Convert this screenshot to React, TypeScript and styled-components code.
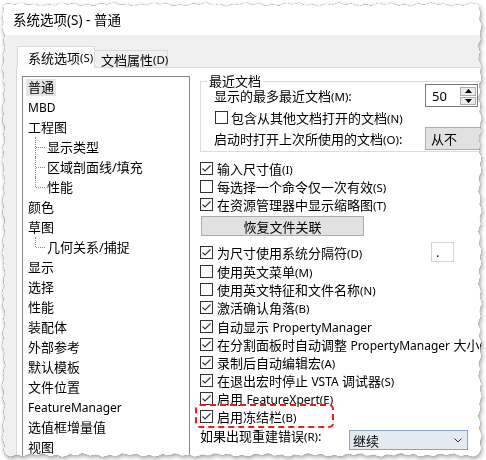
import React from "react";
import styled, { createGlobalStyle, css } from "styled-components";

const FONT = `"Noto Sans", "Noto Sans CJK SC", sans-serif`;

const GlobalStyle = createGlobalStyle`
  html, body {
    margin: 0;
    background: #fff;
  }
  body {
    font-family: ${FONT};
    font-size: 13px;
    color: #000;
  }
`;

// ragged "torn paper" outline of the screenshot
const tornEdge = () => {
  const j = (i: number, s: number) =>
    Math.sin(i * 1.9 + s) * 1.1 + Math.sin(i * 0.55 + s * 2) * 0.9;
  const pts: string[] = [];
  for (let x = 3; x <= 479; x += 4) pts.push(`${x}px ${(4.5 + j(x / 4, 1)).toFixed(1)}px`);
  for (let y = 8; y <= 452; y += 4) pts.push(`${(480 + j(y / 4, 2)).toFixed(1)}px ${y}px`);
  for (let x = 478; x >= 5; x -= 4) pts.push(`${x}px ${(455 + j(x / 4, 3)).toFixed(1)}px`);
  for (let y = 450; y >= 8; y -= 4) pts.push(`${(3.5 + j(y / 4, 4)).toFixed(1)}px ${y}px`);
  return `polygon(${pts.join(",")})`;
};
const CLIP = tornEdge();

type TreeNode = { title: string; selected?: boolean; children?: string[] };

const tree: TreeNode[] = [
  { title: "普通", selected: true },
  { title: "MBD" },
  { title: "工程图", children: ["显示类型", "区域剖面线/填充", "性能"] },
  { title: "颜色" },
  { title: "草图", children: ["几何关系/捕捉"] },
  { title: "显示" },
  { title: "选择" },
  { title: "性能" },
  { title: "装配体" },
  { title: "外部参考" },
  { title: "默认模板" },
  { title: "文件位置" },
  { title: "FeatureManager" },
  { title: "选值框增量值" },
  { title: "视图" },
];

// Latin words render a touch smaller (Segoe UI look), mnemonics smaller still
const Label = ({ text }: { text: string }) => {
  const m = text.match(/^(.*?)(\([A-Z]\))?(:?)$/)!;
  const chunks = m[1]
    .split(/([A-Za-z]+)/)
    .map((s, i) => (i % 2 ? <Latin key={i}>{s}</Latin> : s));
  return (
    <>
      {chunks}
      {m[2] && <Mnemonic>{m[2]}</Mnemonic>}
      {m[3]}
    </>
  );
};

const CheckBox = ({ checked }: { checked?: boolean }) => (
  <Box>
    {checked && (
      <svg width="11" height="11" viewBox="0 0 11 11">
        <polyline
          points="1.5,5.5 4,8 9.5,2.5"
          fill="none"
          stroke="#333"
          strokeWidth="1.1"
        />
      </svg>
    )}
  </Box>
);

const Check = ({
  text,
  checked,
  mt,
  marked,
}: {
  text: string;
  checked?: boolean;
  mt?: number;
  marked?: boolean;
}) => (
  <CheckRow $mt={mt} $marked={marked}>
    <CheckBox checked={checked} />
    <span>
      <Label text={text} />
    </span>
  </CheckRow>
);

const App = () => {
  return (
    <>
      <GlobalStyle />
      <Frame>
        <Window>
          <TitleBar>系统选项(S) - 普通</TitleBar>
          <TabStrip>
            <Tab $active>
              <Label text="系统选项(S)" />
            </Tab>
            <Tab>
              <Label text="文档属性(D)" />
            </Tab>
          </TabStrip>
          <Panel>
            <Tree>
              {tree.map((node) => (
                <React.Fragment key={node.title}>
                  <TreeItem>
                    <TreeText $selected={node.selected}>
                      <Label text={node.title} />
                    </TreeText>
                  </TreeItem>
                  {node.children?.map((c, i) => (
                    <TreeItem
                      key={c}
                      $child
                      $last={i === node.children!.length - 1}
                    >
                      <TreeText>{c}</TreeText>
                    </TreeItem>
                  ))}
                </React.Fragment>
              ))}
            </Tree>

            <Options>
              <Group>
                <Legend>最近文档</Legend>
                <GroupRow $h={23} $mt={-5}>
                  <span>
                    <Label text="显示的最多最近文档(M):" />
                  </span>
                  <Spinner>
                    <SpinValue>50</SpinValue>
                    <SpinButtons>
                      <SpinButton>
                        <svg width="7" height="4" viewBox="0 0 7 4">
                          <polygon points="0,4 7,4 3.5,0" fill="#000" />
                        </svg>
                      </SpinButton>
                      <SpinButton>
                        <svg width="7" height="4" viewBox="0 0 7 4">
                          <polygon points="0,0 7,0 3.5,4" fill="#000" />
                        </svg>
                      </SpinButton>
                    </SpinButtons>
                  </Spinner>
                </GroupRow>
                <GroupRow $h={20}>
                  <InnerCheck>
                    <CheckBox />
                    <span>
                      <Label text="包含从其他文档打开的文档(N)" />
                    </span>
                  </InnerCheck>
                </GroupRow>
                <GroupRow $h={23}>
                  <span>
                    <Label text="启动时打开上次所使用的文档(O):" />
                  </span>
                  <GraySelect>从不</GraySelect>
                </GroupRow>
              </Group>

              <Check text="输入尺寸值(I)" checked mt={7} />
              <Check text="每选择一个命令仅一次有效(S)" />
              <Check text="在资源管理器中显示缩略图(T)" checked />
              <Button>恢复文件关联</Button>

              <SeparatorRow>
                <Check text="为尺寸使用系统分隔符(D)" checked />
                <SmallInput>.</SmallInput>
              </SeparatorRow>
              <Check text="使用英文菜单(M)" />
              <Check text="使用英文特征和文件名称(N)" />
              <Check text="激活确认角落(B)" checked />
              <Check text="自动显示 PropertyManager" checked mt={1} />
              <Check text="在分割面板时自动调整 PropertyManager 大小(N)" checked />
              <Check text="录制后自动编辑宏(A)" checked />
              <Check text="在退出宏时停止 VSTA 调试器(S)" checked />
              <Check text="启用 FeatureXpert(E)" checked />
              <Check text="启用冻结栏(B)" checked marked />

              <ErrorRow>
                <ErrorLabel>
                  <Label text="如果出现重建错误(R):" />
                </ErrorLabel>
                <Combo>
                  <span>继续</span>
                  <svg width="8" height="5" viewBox="0 0 8 5">
                    <polyline
                      points="0.5,0.5 4,4 7.5,0.5"
                      fill="none"
                      stroke="#333"
                      strokeWidth="1"
                    />
                  </svg>
                </Combo>
              </ErrorRow>
            </Options>
          </Panel>
        </Window>
      </Frame>
    </>
  );
};

const Frame = styled.div`
  width: 486px;
  height: 460px;
  overflow: hidden;
  filter: drop-shadow(0 0 0.7px rgba(0, 0, 0, 0.85))
    drop-shadow(1px 2px 2px rgba(0, 0, 0, 0.35));
`;

const Window = styled.div`
  width: 486px;
  height: 460px;
  clip-path: ${CLIP};
  background: #f0f0f0;
  display: flex;
  flex-direction: column;
  overflow: hidden;
`;

const TitleBar = styled.div`
  height: 35px;
  flex-shrink: 0;
  box-sizing: border-box;
  padding: 3px 0 0 13px;
  background: #fff;
  display: flex;
  align-items: center;
  font-size: 13.5px;
`;

const TabStrip = styled.div`
  height: 32px;
  flex-shrink: 0;
  display: flex;
  align-items: flex-end;
  padding-left: 17px;
`;

const Tab = styled.div<{ $active?: boolean }>`
  box-sizing: border-box;
  display: flex;
  align-items: center;
  white-space: nowrap;
  border: 1px solid #d9d9d9;
  border-bottom: none;
  ${(p) =>
    p.$active
      ? css`
          position: relative;
          z-index: 1;
          width: 78px;
          height: 22px;
          margin-bottom: -1px;
          padding-left: 10px;
          background: #fff;
        `
      : css`
          width: 73px;
          height: 17px;
          padding-left: 6px;
          border-left: none;
          background: #f0f0f0;
        `}
`;

const Latin = styled.span`
  font-size: 12px;
`;

const Mnemonic = styled.span`
  font-size: 11.5px;
`;

const Panel = styled.div`
  flex: 1;
  min-height: 0;
  margin-left: 16px;
  padding: 5px 0 0 5px;
  background: #fff;
  border-left: 1px solid #d9d9d9;
  border-top: 1px solid #d9d9d9;
  display: flex;
  gap: 10px;
`;

const Tree = styled.div`
  flex-shrink: 0;
  box-sizing: border-box;
  width: 168px;
  height: 400px;
  margin-top: 3px;
  border: 1px solid #828790;
  background: #fff;
`;

const TreeItem = styled.div<{ $child?: boolean; $last?: boolean }>`
  position: relative;
  height: 20px;
  display: flex;
  align-items: center;
  white-space: nowrap;
  padding-left: ${(p) => (p.$child ? 22 : 3)}px;
  ${(p) =>
    p.$child &&
    css`
      &::before {
        content: "";
        position: absolute;
        left: 12px;
        top: 0;
        height: ${p.$last ? 10 : 20}px;
        border-left: 1px dotted #8a8a8a;
      }
      &::after {
        content: "";
        position: absolute;
        left: 13px;
        top: 10px;
        width: 9px;
        border-top: 1px dotted #8a8a8a;
      }
    `}
`;

const TreeText = styled.span<{ $selected?: boolean }>`
  padding: 0 2px;
  line-height: 17px;
  background: ${(p) => (p.$selected ? "#e5e5e5" : "transparent")};
`;

const Options = styled.div`
  flex-shrink: 0;
  width: 290px;
  display: flex;
  flex-direction: column;
`;

const Group = styled.fieldset`
  margin: 0;
  min-width: 0;
  padding: 0 0 1px 13px;
  border: 1px solid #dcdcdc;
`;

const Legend = styled.legend`
  margin-left: -7px;
  padding: 0 2px;
  line-height: 16px;
`;

const GroupRow = styled.div<{ $h: number; $mt?: number }>`
  height: ${(p) => p.$h}px;
  margin-top: ${(p) => p.$mt ?? 0}px;
  display: grid;
  grid-template-columns: 211px 1fr;
  align-items: center;
  white-space: nowrap;
`;

const InnerCheck = styled.div`
  display: flex;
  align-items: center;
  gap: 3px;
  padding-left: 1px;
`;

const Spinner = styled.div`
  box-sizing: border-box;
  width: 53px;
  height: 23px;
  border: 1px solid #7a7a7a;
  background: #fff;
  display: flex;
`;

const SpinValue = styled.div`
  flex: 1;
  padding-left: 6px;
  display: flex;
  align-items: center;
`;

const SpinButtons = styled.div`
  width: 16px;
  padding: 2px 1px 1px 0;
  display: flex;
  flex-direction: column;
  gap: 1px;
`;

const SpinButton = styled.div`
  flex: 1;
  border: 1px solid #adadad;
  background: #ececec;
  display: flex;
  align-items: center;
  justify-content: center;
`;

const GraySelect = styled.div`
  box-sizing: border-box;
  width: 80px;
  height: 23px;
  padding-left: 5px;
  border: 1px solid #adadad;
  background: #e1e1e1;
  display: flex;
  align-items: center;
`;

const Box = styled.span`
  box-sizing: border-box;
  flex-shrink: 0;
  width: 13px;
  height: 13px;
  border: 1px solid #333;
  background: #fff;
  display: inline-flex;
  align-items: center;
  justify-content: center;
`;

const CheckRow = styled.div<{ $mt?: number; $marked?: boolean }>`
  position: relative;
  height: 18px;
  margin-top: ${(p) => p.$mt ?? 0}px;
  display: flex;
  align-items: center;
  gap: 4px;
  white-space: nowrap;
  ${(p) =>
    p.$marked &&
    css`
      &::after {
        content: "";
        position: absolute;
        left: -5px;
        top: -3px;
        width: 139px;
        height: 24px;
        box-sizing: border-box;
        border: 2px dashed #e2211c;
        border-radius: 5px;
      }
    `}
`;

const Button = styled.div`
  box-sizing: border-box;
  width: 163px;
  height: 20px;
  margin: 3px 0 0 1px;
  border: 1px solid #adadad;
  background: #e1e1e1;
  display: flex;
  align-items: center;
  justify-content: center;
`;

const SeparatorRow = styled.div`
  margin-top: 6px;
  display: grid;
  grid-template-columns: 231px 23px;
  align-items: center;
`;

const SmallInput = styled.div`
  box-sizing: border-box;
  width: 23px;
  height: 20px;
  padding: 0 0 0 4px;
  border: 1px solid #d4d4d4;
  line-height: 18px;
`;

const ErrorRow = styled.div`
  margin-top: 1px;
  display: flex;
  align-items: flex-start;
`;

const ErrorLabel = styled.div`
  width: 149px;
  line-height: 20px;
  white-space: nowrap;
`;

const Combo = styled.div`
  box-sizing: border-box;
  width: 119px;
  height: 20px;
  margin-top: 4px;
  padding: 0 5px 0 3px;
  border: 1px solid #86a3c9;
  background: #e4eaf1;
  display: flex;
  align-items: center;
  justify-content: space-between;
`;

export default App;
